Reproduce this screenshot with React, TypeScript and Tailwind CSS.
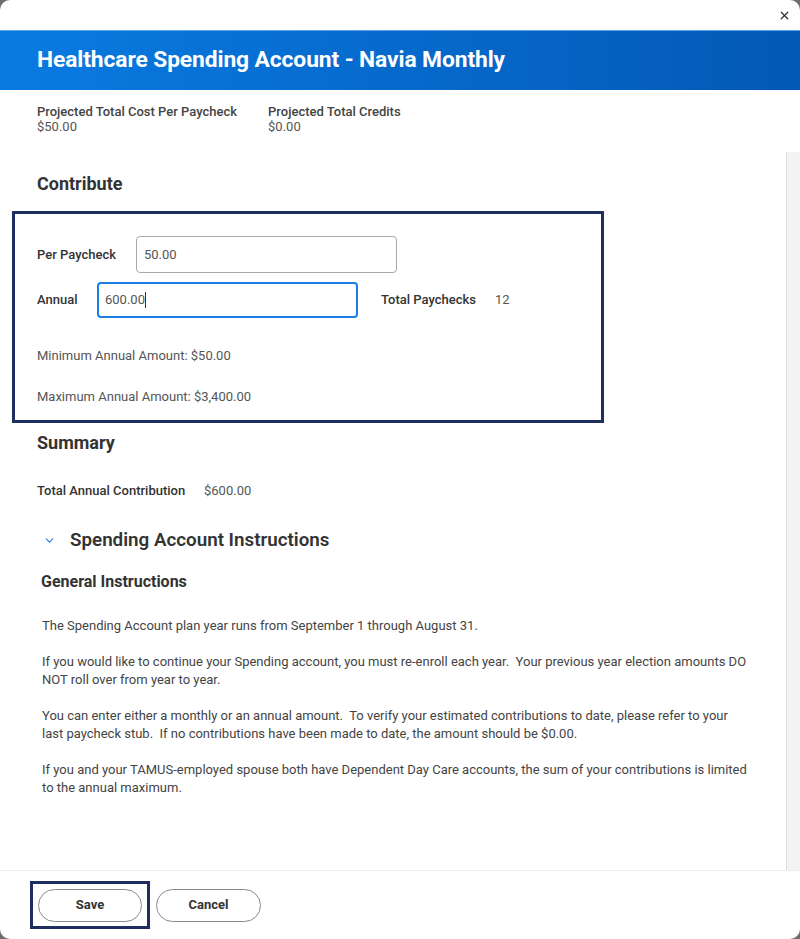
import { ChevronDown, X } from 'lucide-react';

const font = { fontFamily: 'Roboto, "Liberation Sans", sans-serif' };

const instructions = [
  'The Spending Account plan year runs from September 1 through August 31.',
  'If you would like to continue your Spending account, you must re-enroll each year.  Your previous year election amounts DO NOT roll over from year to year.',
  'You can enter either a monthly or an annual amount.  To verify your estimated contributions to date, please refer to your last paycheck stub.  If no contributions have been made to date, the amount should be $0.00.',
  'If you and your TAMUS-employed spouse both have Dependent Day Care accounts, the sum of your contributions is limited to the annual maximum.',
];

export default function App() {
  return (
    <div className="w-[800px] h-[939px] bg-[#6e6e6e]" style={font}>
      <div className="w-full h-full bg-white rounded-[10px] overflow-hidden flex flex-col">
        {/* close row */}
        <div className="h-[30px] flex items-center justify-end pr-[9px]">
          <X size={13} strokeWidth={2.2} className="text-[#333]" />
        </div>

        {/* title band */}
        <div className="h-[60px] flex items-center pl-[37px] bg-gradient-to-r from-[#0a7be2] to-[#0459b6] border-t border-[#5aa5ec]">
          <h1 className="text-[22.8px] font-bold text-white tracking-[-0.1px]">Healthcare Spending Account - Navia Monthly</h1>
        </div>

        {/* projected totals */}
        <div className="h-[62px] flex gap-[31px] pl-[37px] pt-[14px] text-[13px] leading-[15px] text-[#444]">
          <div>
            <div className="font-medium">Projected Total Cost Per Paycheck</div>
            <div className="text-[#555]">$50.00</div>
          </div>
          <div>
            <div className="font-medium">Projected Total Credits</div>
            <div className="text-[#555]">$0.00</div>
          </div>
        </div>

        {/* scrolling body */}
        <div className="flex-1 flex min-h-0">
          <div className="flex-1 overflow-hidden">
            <h2 className="pl-[37px] pt-[20px] text-[18px] leading-[24px] font-bold text-[#333]">Contribute</h2>

            <div className="ml-[12px] mt-[15px] w-[592px] h-[212px] border-[3px] border-[#1e2f5e] pl-[22px] pt-[22px]">
              <div className="flex items-center">
                <span className="text-[13px] font-medium text-[#333] w-[99px]">Per Paycheck</span>
                <div className="w-[261px] h-[37px] border border-[#a8a8a8] rounded-[4px] flex items-center pl-[7px] text-[13px] text-[#555]">50.00</div>
              </div>
              <div className="flex items-center mt-[9px]">
                <span className="text-[13px] font-medium text-[#333] w-[60px]">Annual</span>
                <div className="w-[261px] h-[36px] border-2 border-[#1a7fe3] rounded-[4px] flex items-center pl-[6px] text-[13px] text-[#555]">
                  600.00<span className="w-px h-[16px] bg-[#333]" />
                </div>
                <span className="ml-[23px] text-[13px] font-medium text-[#333] w-[114px]">Total Paychecks</span>
                <span className="text-[13px] text-[#555]">12</span>
              </div>
              <p className="mt-[29px] text-[13px] leading-[18px] text-[#555]">Minimum Annual Amount: $50.00</p>
              <p className="mt-[23px] text-[13px] leading-[18px] text-[#555]">Maximum Annual Amount: $3,400.00</p>
            </div>

            <h2 className="pl-[37px] mt-[8px] text-[18px] leading-[24px] font-bold text-[#333]">Summary</h2>
            <div className="pl-[37px] mt-[27px] flex text-[13px] leading-[18px]">
              <span className="font-medium text-[#333] w-[167px]">Total Annual Contribution</span>
              <span className="text-[#555]">$600.00</span>
            </div>

            <div className="mt-[28px] pl-[43px] flex items-center h-[24px]">
              <ChevronDown size={13} strokeWidth={2} className="text-[#2a7de1]" />
              <span className="ml-[14px] text-[18.8px] font-semibold text-[#333]">Spending Account Instructions</span>
            </div>

            <h3 className="pl-[41px] mt-[19px] text-[16px] leading-[22px] font-bold text-[#333]">General Instructions</h3>

            <div className="pl-[42px] pr-[36px] mt-[24px] space-y-[18px] text-[13px] leading-[18px] text-[#444]">
              {instructions.map((t, i) => (
                <p key={i} className="whitespace-pre-wrap">{t}</p>
              ))}
            </div>
          </div>
          <div className="w-[14px] bg-[#f3f3f3] border-l border-[#dcdcdc]" />
        </div>

        {/* footer */}
        <div className="h-[69px] border-t border-[#ececec] flex items-center pl-[30px] gap-[6px]">
          <div className="border-[3px] border-[#1e2f5e] p-[5px] h-[48px] flex items-center">
            <button className="w-[104px] h-[33px] rounded-full border border-[#8a8a8a] bg-white text-[13px] font-bold text-[#333]">Save</button>
          </div>
          <button className="w-[105px] h-[33px] rounded-full border border-[#8a8a8a] bg-white text-[13px] font-bold text-[#333]">Cancel</button>
        </div>
      </div>
    </div>
  );
}
